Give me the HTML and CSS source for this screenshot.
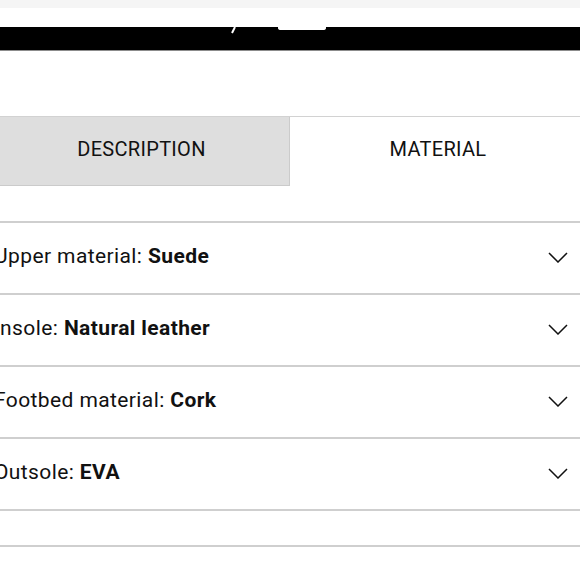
FILE: index.html
```html
<!DOCTYPE html>
<html lang="en">
<head>
<meta charset="utf-8">
<title>Material</title>
<link rel="stylesheet" href="styles.css">
</head>
<body>
<div class="page">
  <div class="topband"></div>
  <div class="header-gap"></div>
  <div class="blackbar">
    <svg class="bar-art" width="592" height="23" viewBox="0 0 592 23" aria-hidden="true">
      <path d="M241 0 L238 6" stroke="#fff" stroke-width="2" fill="none"/>
      <path d="M284 0 H332 V1 Q332 3 329 3 H287 Q284 3 284 1 Z" fill="#fff"/>
    </svg>
  </div>
  <div class="tabs">
    <div class="tab tab-inactive">DESCRIPTION</div>
    <div class="tab tab-active">MATERIAL</div>
  </div>
  <ul class="specs">
    <li class="spec">
      <span class="spec-text">Upper material: <b>Suede</b></span>
      <svg class="chev" width="20" height="11" viewBox="0 0 20 11"><path d="M1 1 L10 10 L19 1" fill="none" stroke="#111" stroke-width="1.5"/></svg>
    </li>
    <li class="spec">
      <span class="spec-text">Insole: <b>Natural leather</b></span>
      <svg class="chev" width="20" height="11" viewBox="0 0 20 11"><path d="M1 1 L10 10 L19 1" fill="none" stroke="#111" stroke-width="1.5"/></svg>
    </li>
    <li class="spec">
      <span class="spec-text">Footbed material: <b>Cork</b></span>
      <svg class="chev" width="20" height="11" viewBox="0 0 20 11"><path d="M1 1 L10 10 L19 1" fill="none" stroke="#111" stroke-width="1.5"/></svg>
    </li>
    <li class="spec">
      <span class="spec-text">Outsole: <b>EVA</b></span>
      <svg class="chev" width="20" height="11" viewBox="0 0 20 11"><path d="M1 1 L10 10 L19 1" fill="none" stroke="#111" stroke-width="1.5"/></svg>
    </li>
    <li class="spec spec-empty"></li>
  </ul>
</div>
</body>
</html>
```
FILE: styles.css
```css
html, body {
  margin: 0;
  padding: 0;
  overflow: hidden;
  background: #fff;
}
body {
  font-family: Roboto, "Liberation Sans", Arial, sans-serif;
  color: #111;
}
.page {
  width: 592px;
  margin-left: -6px;
}
.topband {
  height: 8px;
  background: #f5f5f5;
}
.header-gap {
  height: 19px;
}
.blackbar {
  height: 23px;
  background: #000;
  border-bottom: 1px solid #8c8c8c;
}
.bar-art {
  display: block;
}
.tabs {
  margin-top: 65px;
  border-top: 1px solid #d2d2d2;
  display: grid;
  grid-template-columns: 296px 296px;
}
.tab {
  height: 68px;
  display: flex;
  align-items: center;
  justify-content: center;
  font-size: 20px;
  letter-spacing: 0.3px;
  padding-bottom: 5px;
  box-sizing: border-box;
}
.tab-inactive {
  background: #dedede;
  border-right: 1px solid #cbcbcb;
  border-bottom: 1px solid #cbcbcb;
  height: 69px;
}
.tab-active {
  background: #fff;
}
.specs {
  list-style: none;
  margin: 35px 0 0;
  padding: 0;
}
.spec {
  height: 72px;
  box-sizing: border-box;
  border-top: 2px solid #cfcfcf;
  display: flex;
  align-items: center;
  justify-content: space-between;
  padding: 0 18px 4px 0;
  font-size: 21px;
  letter-spacing: 0.4px;
}
.spec-text b {
  font-weight: 700;
}
.chev {
  display: block;
  margin-top: 3px;
}
.spec-empty {
  height: 38px;
  border-bottom: 2px solid #cfcfcf;
}
```
